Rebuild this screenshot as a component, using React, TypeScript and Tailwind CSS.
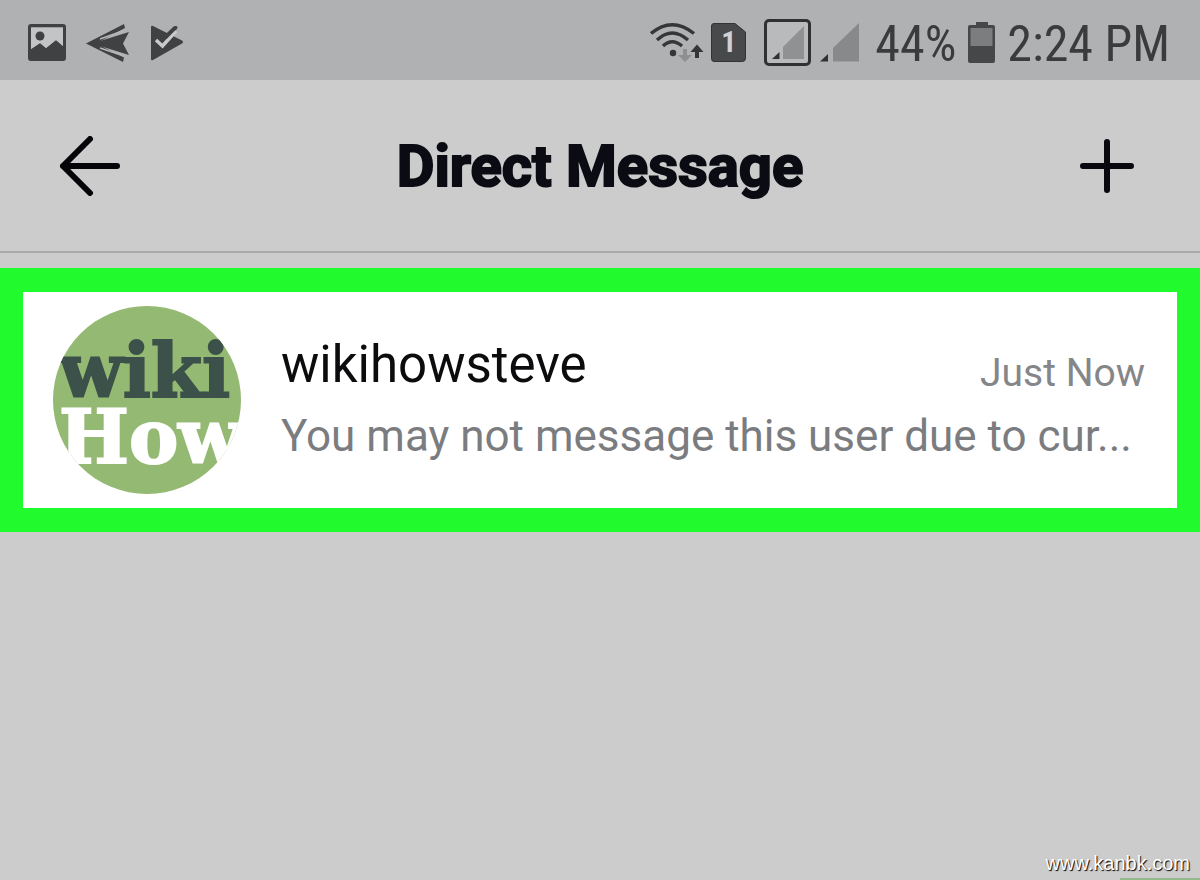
import React from "react";

function ImageIcon() {
  return (
    <svg viewBox="0 0 38 38" className="size-[38px]" aria-hidden="true">
      <path fill="#3f4142" fillRule="evenodd" d="M3 0h32q3 0 3 3v31q0 3-3 3H3q-3 0-3-3V3q0-3 3-3Zm0 3.500V25l9-6 6 5 10-8 7 6V3.500Z" />
      <path fill="#c3c4c5" d="M3 3.500V25l9-6 6 5 10-8 7 6V3.500Z" />
      <circle cx="12" cy="12" r="4.500" fill="#3f4142" />
    </svg>
  );
}

function SendIcon() {
  return (
    <svg viewBox="0 0 44 38" className="h-[38px] w-[44px]" aria-hidden="true" fill="#3f4142">
      <path d="M0 19.500 38 0 39 4 10 19.500 38 33.500 37 38Z" />
      <path d="M6 19.500 43 8 37 19.500 43 31Z" />
      <path d="M14 15 38 6.500 M14 24 38 32" stroke="#b6b7b8" strokeWidth="1.500" />
    </svg>
  );
}

function PlayCheckIcon() {
  return (
    <svg viewBox="0 0 34 36" className="h-[36px] w-[34px]" aria-hidden="true">
      <path fill="#3f4142" d="M1 2Q1 0 3 1L32 15.500q2 1.500 0 3L3 35q-2 1-2-1Z" />
      <path d="M16 0 18 9 22 10 32 4V0Z" fill="#b0b1b2" />
      <path d="M13 14.500 25 3" fill="none" stroke="#3f4142" strokeWidth="4" strokeLinecap="round" />
      <path d="m6 15 6.500 6L26 6" fill="none" stroke="#c9cacb" strokeWidth="3.500" />
      <path d="M16 12.500 26 2.500" fill="none" stroke="#3f4142" strokeWidth="3" strokeLinecap="round" />
    </svg>
  );
}

function WifiIcon() {
  return (
    <svg viewBox="0 0 54 40" className="h-[40px] w-[54px]" aria-hidden="true">
      <g fill="none" stroke="#353637" strokeWidth="3.500">
        <path d="M1 11.500Q22-6 44 11.500" />
        <path d="M7 18Q22 4 38 18" />
        <path d="M13 24Q22 15.500 32 24" />
      </g>
      <circle cx="23" cy="31" r="3.200" fill="#353637" />
      <path d="M33 27h4v6h5l-7 7-7-7h5Z" fill="#8e8f90" />
      <path d="M45 36V30h-4.500L47 22.500 53.500 30H49v6Z" fill="#353637" />
    </svg>
  );
}

function SimIcon() {
  return (
    <span className="relative flex h-[39px] w-[35px] items-center justify-center">
      <svg viewBox="0 0 35 39" className="absolute inset-0" aria-hidden="true">
        <path fill="#48494a" stroke="#323334" strokeWidth="1" d="M3 .500h21L34.500 9v26q0 3.500-3 3.500H3q-2.500 0-2.500-3V3Q.500.500 3 .500Z" />
      </svg>
      <span className="relative text-[30px] leading-none font-bold text-[#d0d1d2]">1</span>
    </span>
  );
}

function BoxedSignalIcon() {
  return (
    <svg viewBox="0 0 47 47" className="size-[47px]" aria-hidden="true">
      <rect x="1.500" y="1.500" width="44" height="44" rx="3.500" fill="#b9babb" stroke="#303132" strokeWidth="3" />
      <path d="M19 40V28L40 7V40Z" fill="#909192" />
      <path d="M8 40 15.500 33V40Z" fill="#303132" />
    </svg>
  );
}

function SignalIcon() {
  return (
    <svg viewBox="0 0 39 39" className="size-[39px]" aria-hidden="true">
      <path d="M13 38.500V25L39 0V38.500Z" fill="#88898a" />
      <path d="M0 38.500 8 31V38.500Z" fill="#303132" />
    </svg>
  );
}

function BatteryIcon() {
  return (
    <svg viewBox="0 0 27 41" className="h-[41px] w-[27px]" aria-hidden="true">
      <path d="M8 0h12v3h5q2 0 2 2v34q0 2-2 2H2q-2 0-2-2V5q0-2 2-2h6Z" fill="#464748" />
      <path d="M2.500 6h22v18h-22Z" fill="#7c7d7e" />
    </svg>
  );
}

function StatusBar() {
  return (
    <div className="flex h-20 items-center justify-between bg-[#b0b1b2] pt-1 pr-[30px] pl-7 text-[#3a3b3c]">
      <div className="flex items-center gap-5 pt-0.5">
        <ImageIcon />
        <SendIcon />
        <PlayCheckIcon />
      </div>
      <div className="flex items-center font-['Roboto_Condensed',Roboto,sans-serif] text-[50px] leading-none">
        <WifiIcon />
        <span className="ml-[7px]"><SimIcon /></span>
        <span className="ml-[18px]"><BoxedSignalIcon /></span>
        <span className="ml-[9px]"><SignalIcon /></span>
        <span className="ml-4 pt-1">44%</span>
        <span className="ml-3"><BatteryIcon /></span>
        <span className="ml-3 pt-1">2:24 PM</span>
      </div>
    </div>
  );
}

function Header() {
  return (
    <header className="flex h-[173px] items-center justify-between border-b-2 border-[#a9a9a9] pr-[66px] pl-[59px]">
      <button type="button" aria-label="Back" className="w-[62px]">
        <svg viewBox="0 0 62 60" className="h-[60px] w-[62px]" fill="none" stroke="#050509" strokeWidth="6" strokeLinecap="round" strokeLinejoin="round" aria-hidden="true">
          <path d="M31 3 4 30 31 57M4 30H58" />
        </svg>
      </button>
      <h1 className="text-[58px] leading-none font-bold text-[#0b0b13] [-webkit-text-stroke:2px_#0b0b13]">Direct Message</h1>
      <button type="button" aria-label="New message" className="flex w-[55px] justify-end">
        <svg viewBox="0 0 54 54" className="size-[54px]" fill="none" stroke="#08080e" strokeWidth="6" strokeLinecap="round" aria-hidden="true">
          <path d="M27 3V51M3 27H51" />
        </svg>
      </button>
    </header>
  );
}

function Avatar() {
  return (
    <div className="flex size-[188px] shrink-0 flex-col overflow-hidden rounded-full bg-[#94b973] pt-8 pl-1.5 font-['DejaVu_Serif',serif] text-[74px] leading-[66px] font-bold">
      <span className="text-[#3b5149] [-webkit-text-stroke:2px_#3b5149]">wiki</span>
      <span className="text-white [-webkit-text-stroke:2px_#fff]">How</span>
    </div>
  );
}

function Conversation() {
  return (
    <a href="#wikihowsteve" className="mt-[15px] flex items-center gap-10 border-x-[23px] border-y-24 border-[#21fb2e] bg-white py-[14px] pr-8 pl-[30px]">
      <Avatar />
      <div className="min-w-0 flex-1">
        <div className="flex items-end justify-between">
          <span className="text-[51px] leading-[72px] text-[#0c0c0e]">wikihowsteve</span>
          <time className="text-[39px] leading-[56px] text-[#858689]">Just Now</time>
        </div>
        <p className="text-[44px] leading-[70px] whitespace-nowrap text-[#7b7c80]">
          You may not message this user due to cur...
        </p>
      </div>
    </a>
  );
}

export default function App() {
  return (
    <div className="flex min-h-screen flex-col bg-[#cccccc] font-[Roboto,sans-serif]">
      <StatusBar />
      <Header />
      <main className="flex-1">
        <Conversation />
      </main>
      <footer className="flex flex-col items-end">
        <a href="#kanbk" className="pr-[10px] font-['Liberation_Sans',sans-serif] text-[20px] leading-[30px] text-white [text-shadow:1px_1px_1px_#000]">
          www.kanbk.com
        </a>
        <div className="h-[2px] w-20 bg-[#94b98b]" />
      </footer>
    </div>
  );
}
